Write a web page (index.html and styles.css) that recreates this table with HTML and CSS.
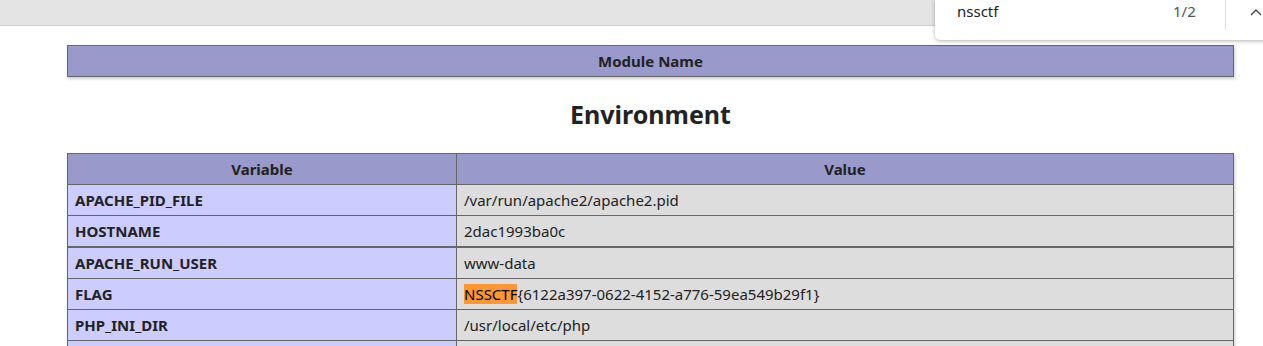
FILE: index.html
```html
<!DOCTYPE html>
<html lang="en">

<head>
    <meta charset="UTF-8">
    <title>phpinfo()</title>
    <link rel="stylesheet" href="styles.css">
</head>

<body>
    <div class="topbar"></div>

    <div class="findbar">
        <span class="find-query">nssctf</span>
        <span class="find-count">1/2</span>
        <span class="find-sep"></span>
        <svg class="find-up" width="12" height="8" viewBox="0 0 12 8">
            <path d="M1 7 L6 2 L11 7" fill="none" stroke="#444" stroke-width="1.4"/>
        </svg>
    </div>

    <main>
        <table class="info">
            <tr class="h"><th>Module Name</th></tr>
        </table>

        <h2>Environment</h2>

        <table class="info">
            <tr class="h"><th class="col-var">Variable</th><th>Value</th></tr>
            <tr><td class="e">APACHE_PID_FILE</td><td class="v">/var/run/apache2/apache2.pid</td></tr>
            <tr><td class="e">HOSTNAME</td><td class="v">2dac1993ba0c</td></tr>
            <tr class="thick"><td class="e">APACHE_RUN_USER</td><td class="v">www-data</td></tr>
            <tr><td class="e">FLAG</td><td class="v"><mark>NSSCTF</mark>{6122a397-0622-4152-a776-59ea549b29f1}</td></tr>
            <tr><td class="e">PHP_INI_DIR</td><td class="v">/usr/local/etc/php</td></tr>
            <tr><td class="e">&nbsp;</td><td class="v">&nbsp;</td></tr>
        </table>
    </main>
</body>

</html>
```

FILE: styles.css
```css
html, body {
    margin: 0;
    padding: 0;
    background: #fff;
    color: #222;
    font-family: "Noto Sans", "Open Sans", sans-serif;
    overflow: hidden;
}

.topbar {
    height: 25px;
    background: #e4e4e4;
    border-bottom: 1px solid #cfcfcf;
}

.findbar {
    position: absolute;
    top: 0;
    left: 935px;
    width: 340px;
    height: 40px;
    background: #fff;
    border-bottom-left-radius: 5px;
    box-shadow: 0 1px 4px rgba(0, 0, 0, .3);
    display: flex;
    align-items: flex-start;
    font-size: 15px;
}

.find-query {
    margin: 1px 0 0 22px;
    width: 216px;
    color: #222;
}

.find-count {
    margin-top: 1px;
    color: #555;
    width: 52px;
}

.find-sep {
    width: 1px;
    height: 30px;
    background: #e0e0e0;
}

.find-up {
    margin: 8px 0 0 24px;
}

main {
    padding: 19px 0 0 67px;
}

table.info {
    width: 1167px;
    border-collapse: collapse;
    box-shadow: 1px 2px 3px #ccc;
    font-size: 15px;
    line-height: 20px;
}

th, td {
    border: 1px solid #666;
    padding: 5px 7px;
    text-align: left;
    vertical-align: baseline;
}

.h th {
    background: #99c;
    text-align: center;
    font-weight: bold;
}

.col-var {
    width: 374px;
}

.e {
    background: #ccf;
    font-weight: bold;
}

.v {
    background: #ddd;
}

.thick td {
    border-top-width: 2px;
}

mark {
    background: #ff9632;
    color: #000;
}

h2 {
    margin: 21px 0 23px;
    width: 1167px;
    text-align: center;
    font-size: 25px;
    line-height: 32px;
    font-weight: bold;
}
```
